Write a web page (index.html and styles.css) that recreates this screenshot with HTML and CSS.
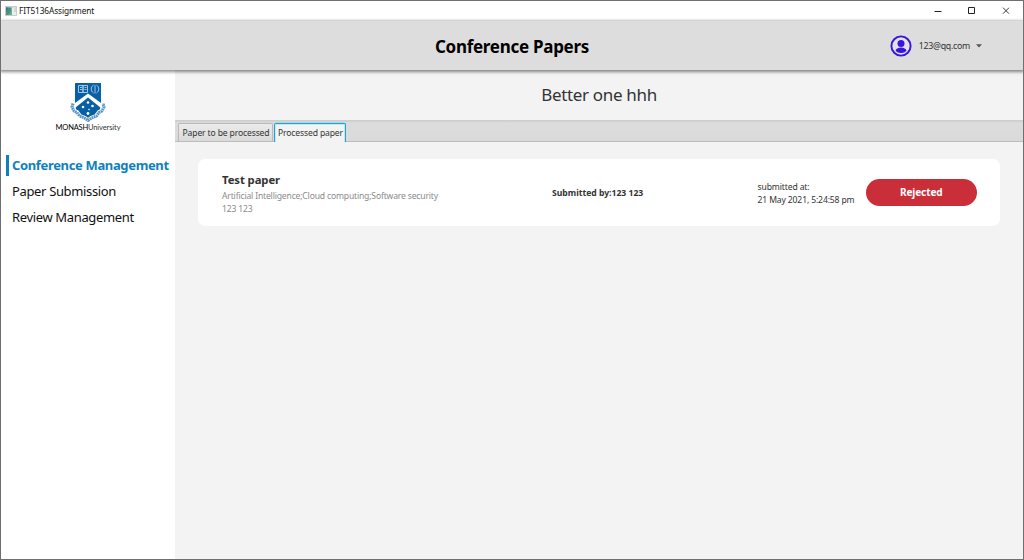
FILE: index.html
```html
<!DOCTYPE html>
<html lang="en">
<head>
<meta charset="utf-8">
<title>FIT5136Assignment</title>
<link rel="stylesheet" href="styles.css">
</head>
<body>
<div class="window">
  <div class="titlebar">
    <svg class="app-icon" width="12" height="10" viewBox="0 0 12 10"><rect width="12" height="10" fill="#c9cdcc"/><rect x="1" y="1.5" width="5.5" height="7.5" fill="#4b8f86"/><path d="M1 1.5h2.5L1 6z" fill="#3d7796"/><path d="M3 9l3.500-5v5z" fill="#5fae7c"/><rect x="7" y="1.500" width="4" height="7.500" fill="#e9efec"/><rect x="9.500" y="2" width="1" height="4" fill="#a9cdbd"/></svg>
    <span class="app-name">FIT5136Assignment</span>
    <div class="controls">
      <svg width="8" height="8" viewBox="0 0 8 8"><path d="M.5 4.500h7" stroke="#222"/></svg>
      <svg width="8" height="8" viewBox="0 0 8 8"><path d="M.5 .5h6v6h-6z" fill="none" stroke="#222"/></svg>
      <svg width="8" height="8" viewBox="0 0 8 8"><path d="M1 .7l6 6M7 .7l-6 6" stroke="#222" stroke-width=".9"/></svg>
    </div>
  </div>
  <header class="header">
    <h1 class="heading">Conference Papers</h1>
    <div class="account">
      <svg width="22" height="22" viewBox="0 0 22 22"><circle cx="11" cy="11" r="9.600" fill="#e2e0e8" stroke="#3913d8" stroke-width="1.900"/><circle cx="11" cy="8.400" r="3.500" fill="#3913d8"/><ellipse cx="11" cy="15.300" rx="5.200" ry="2.700" fill="#3913d8"/></svg>
      <span class="email">123@qq.com</span>
      <svg class="caret" width="6" height="4" viewBox="0 0 6 4"><path d="M0 .3h6L3 3.500z" fill="#555"/></svg>
    </div>
  </header>
  <div class="body">
    <aside class="sidebar">
      <div class="logo">
        <svg width="36" height="39" viewBox="0 0 36 39">
          <path d="M5 0h26v20c0 8-5 13-13 18C10 33 5 28 5 20z" fill="#075fa6"/>
          <g fill="none" stroke="#b5d0e5" stroke-width=".9"><path d="M8.500 2.500h4.500v7h-4.500zM13 2.500h4.500v7h-4.500zM10 4.500h2M10 6.500h2M14.500 4.500h2M14.500 6.500h2"/><path d="M23.500 2c-3 2-3 6 0 8M26.500 2c3 2 3 6 0 8M25 2v8.500"/></g>
          <path d="M2.500 21l-1.500 3 2 4 4 1 3 4 5 2 3 2.500 3-2.500 5-2 3-4 4-1 2-4-1.500-3" fill="none" stroke="#fff" stroke-width="4"/>
          <path d="M3 20.500l-1 3.500 2 4 3 1.500 2.500 3.500 5 2 3.500 2.500 3.500-2.500 5-2 2.500-3.500 3-1.500 2-4-1-3.500" fill="none" stroke="#5c97c5" stroke-width="3" stroke-dasharray="1.800 .5"/>
          <path d="M5 20L18 10.500 31 20v5L18 14.500 5 25z" fill="#fff"/>
          <g fill="#fff"><circle cx="18" cy="19.500" r="1.300"/><circle cx="13" cy="24" r="1.300"/><circle cx="22.500" cy="23" r="1.300"/><circle cx="19" cy="26.500" r=".8"/><circle cx="18" cy="30.500" r="1.400"/></g>
        </svg>
        <div class="wordmark"><span class="monash">MONASH</span><span class="university">University</span></div>
      </div>
      <nav class="nav">
        <a class="nav-item active">Conference Management</a>
        <a class="nav-item submission">Paper Submission</a>
        <a class="nav-item review">Review Management</a>
      </nav>
    </aside>
    <main class="main">
      <h2 class="conference">Better one hhh</h2>
      <div class="tabs">
        <div class="tab tab-first">Paper to be processed</div>
        <div class="tab tab-selected">Processed paper</div>
      </div>
      <section class="card">
        <div class="paper">
          <div class="paper-title">Test paper</div>
          <div class="paper-topics">Artificial Intelligence;Cloud computing;Software security</div>
          <div class="paper-author">123 123</div>
        </div>
        <div class="submitter">Submitted by:123 123</div>
        <div class="date"><div class="date-label">submitted at:</div><div class="date-value">21 May 2021, 5:24:58 pm</div></div>
        <button class="status">Rejected</button>
      </section>
    </main>
  </div>
</div>
</body>
</html>
```
FILE: styles.css
```css
* { box-sizing: border-box; }
body { margin: 0; font-family: "Noto Sans", "Open Sans", sans-serif; color: #333; white-space: nowrap; }
h1, h2 { margin: 0; }
svg { display: block; flex: none; }
.window { width: 1024px; height: 560px; border: 1px solid #6f6f6f; background: #fff; display: flex; flex-direction: column; overflow: hidden; }
.titlebar { height: 20px; flex: none; display: flex; align-items: center; padding: 0 13px 0 4px; }
.app-name { font-size: 8.3px; letter-spacing: -.1px; color: #111; margin-left: 2px; line-height: 22px; }
.controls { margin-left: auto; display: flex; gap: 26px; }
.header { height: 49px; flex: none; background: #ddd; display: grid; grid-template-columns: 1fr auto 1fr; align-items: center; box-shadow: 0 1px 3px 1px rgba(0,0,0,.45); z-index: 1; }
.heading { grid-column: 2; font-size: 17px; line-height: 24px; letter-spacing: -.28px; padding-top: 2px; color: #000; font-weight: 700; }
.account { grid-column: 3; justify-self: end; display: flex; align-items: center; margin-right: 41px; }
.email { font-size: 8.8px; letter-spacing: -.27px; line-height: 14px; margin-left: 7px; }
.caret { margin-left: 6px; }
.body { flex: 1; display: flex; min-height: 0; }
.sidebar { width: 174px; flex: none; padding-top: 13px; }
.logo { display: flex; flex-direction: column; align-items: center; height: 72px; }
.wordmark { display: flex; font-family: Lato, sans-serif; font-size: 7.5px; line-height: 12px; color: #111; }
.monash { letter-spacing: -.2px; color: #000; }
.university { font-weight: 400; color: #333; letter-spacing: -.1px; }
.nav { padding-left: 5px; display: flex; flex-direction: column; gap: 5px; }
.nav-item { height: 21px; line-height: 20px; font-size: 13px; letter-spacing: -.35px; color: #111; border-left: 3px solid transparent; padding-left: 3px; }
.nav-item.active { color: #0f7fbe; font-weight: 700; letter-spacing: -.35px; border-color: #0f7fbe; }
.main { flex: 1; background: #f3f3f3; }
.conference { height: 50px; line-height: 50px; text-align: center; font-size: 17px; letter-spacing: -.33px; font-weight: 400; padding-right: 1px; }
.tabs { height: 22px; display: flex; align-items: flex-end; padding-left: 3px; background: linear-gradient(#cbcbcb, #dcdcdc 3px, #dadada); border-bottom: 1px solid #bcbcbc; }
.tab { height: 18px; border: 1px solid #b9b9b9; border-bottom: 0; border-radius: 2px 2px 0 0; font-size: 8.6px; letter-spacing: -.15px; line-height: 18px; padding-left: 1px; text-align: center; }
.tab-first { width: 95px; background: linear-gradient(#ebebeb, #dadada); }
.tab-selected { width: 72px; height: 19px; margin: 0 0 -1px 1px; background: #f3f3f3; border: 1.500px solid #1aa7d6; border-width: 1px 1px 0; box-shadow: 0 -1px 0 -.5px #8fd0e4, inset 1px 1px 0 #c5e6f0, inset -1px 0 0 #c5e6f0; }
.card { margin: 17px 24px 0 23px; height: 67px; background: #fff; border-radius: 7px; display: flex; align-items: center; padding-right: 23.500px; }
.paper { width: 354px; padding-left: 24px; }
.paper-title { font-size: 11.3px; letter-spacing: -.08px; font-weight: 700; line-height: 16px; margin-bottom: 2px; }
.paper-topics, .paper-author { font-size: 8.6px; letter-spacing: -.18px; line-height: 13px; color: #8b8b8b; }
.paper-author { margin-bottom: -2px; }
.submitter { width: 205px; font-size: 8.6px; font-weight: 700; }
.date { width: 109px; font-size: 8.6px; letter-spacing: -.14px; line-height: 13px; padding: 2px 0 0 .5px; }
.status { width: 110.500px; height: 27px; border: 0; border-radius: 14px; background: #c92e39; color: #fff; font: 700 10px/27px "Noto Sans", sans-serif; letter-spacing: -.1px; padding: 0; }
```
